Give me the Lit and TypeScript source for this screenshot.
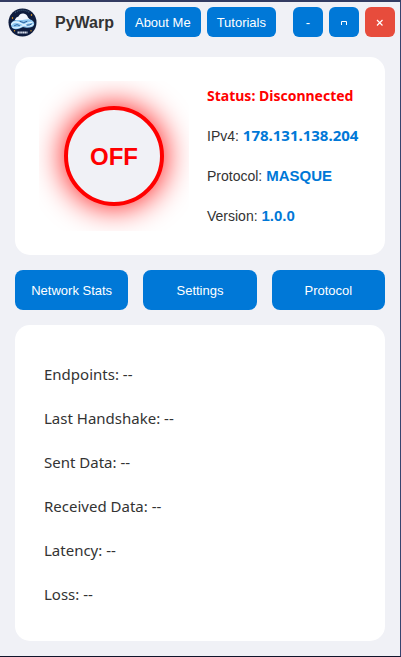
import { LitElement, html, css } from "lit";
import { customElement, state } from "lit/decorators.js";

interface Stat {
  label: string;
  value: string;
}

@customElement("warp-logo")
class WarpLogo extends LitElement {
  static styles = css`
    :host {
      display: block;
      width: 30px;
      height: 30px;
    }
    svg {
      display: block;
      width: 100%;
      height: 100%;
    }
  `;

  render() {
    return html`
      <svg viewBox="0 0 30 30" role="img" aria-label="PyWarp logo">
        <circle cx="15.500" cy="15.500" r="14" fill="#0e1c3e" />
        <path d="M8 5.500Q15.500 1 23 5.500" fill="none" stroke="#3c5675" stroke-width="1.500" stroke-dasharray="1 1" />
        <path d="M8 12.500Q9 10 11.500 9.500Q13 6 16.500 6.500Q20 7 21 10.500L23.500 13H8Z" fill="#f2f7ff" />
        <path d="M4 18C4 14 8 12.500 12 13C16 13.500 19 11.500 23 12.500C28 13.500 28.500 18.500 25 20C21 21.500 18 20.500 16 20C12 22.500 4.500 24 4 18Z" fill="#8cc6f0" />
        <path d="M4.500 17.500C6.500 14 11 14.500 15 17C19 19.500 23 20 26 17.500M6 20.500C11 22 14 20 17 18C19 16.500 22 15 25 15.500"
          fill="none" stroke="#dff2ff" stroke-width="1.300" stroke-linecap="round" />
        <path d="M7.500 18.500Q10 16.500 12.500 18.500M13 14.500Q17 17 20 14.500M20 18.200Q22.500 18.500 24.500 17"
          fill="none" stroke="#285e9b" stroke-width="1" stroke-linecap="round" />
        <path d="M10.500 25.500H20.500" stroke="#d7deed" stroke-width="2" stroke-dasharray="1.500 0.300" />
        <path d="M5.500 10V12M24.500 7V9M7.500 23V24.500M24 23V24.500" stroke="#bd8427" stroke-width="1.200" />
      </svg>
    `;
  }
}

@customElement("app-root")
class AppRoot extends LitElement {
  static styles = css`
    :host {
      display: block;
      font-family: "Liberation Sans", Arial, sans-serif;
      color: #333333;
    }
    * {
      box-sizing: border-box;
    }
    .window {
      min-height: 100vh;
      background: #f0f1f6;
      border-top: 2px solid #333c62;
      border-right: 1px solid #37436f;
      border-bottom: 1px solid #10152b;
    }
    .titlebar {
      display: flex;
      align-items: center;
      gap: 6px;
      padding: 5px 5px 0 7px;
    }
    .title {
      flex: 1;
      margin: 0 0 0 12px;
      font-size: 16px;
      line-height: 32px;
      height: 30px;
      font-weight: bold;
    }
    button {
      margin: 0;
      padding: 0;
      border: 0;
      color: #ffffff;
      background: #0078d7;
      font-family: inherit;
      font-size: 13px;
      line-height: 20px;
      cursor: pointer;
    }
    .link {
      height: 30px;
      padding: 2px 10px 0;
      border-radius: 6px;
    }
    .controls {
      display: flex;
      gap: 6px;
      margin-left: 11px;
    }
    .control {
      display: grid;
      place-items: center;
      width: 30px;
      height: 30px;
      padding-top: 2px;
      border-radius: 6px;
    }
    .control svg {
      width: 10px;
      height: 10px;
      fill: none;
      stroke: #ffffff;
    }
    .close {
      background: #e74c3c;
    }
    main {
      display: grid;
      gap: 15px;
      padding: 20px 15px 15px;
    }
    .card {
      background: #ffffff;
      border-radius: 15px;
    }
    .connection {
      display: flex;
      align-items: center;
      gap: 18px;
      padding: 24px;
    }
    .glow {
      display: grid;
      place-items: center;
      flex: none;
      width: 150px;
      height: 150px;
      overflow: hidden;
    }
    .power {
      width: 100px;
      height: 100px;
      padding-top: 2px;
      border: 4px solid #ff0000;
      border-radius: 50%;
      color: #ff0000;
      background: #f0f1f6;
      box-shadow: 0 0 32px #ff0000;
      font-size: 24px;
      font-weight: bold;
    }
    .details {
      display: grid;
      gap: 20px;
      font-size: 14px;
      line-height: 20px;
      white-space: nowrap;
    }
    .details p {
      height: 20px;
      margin: 0;
    }
    .details .status {
      color: #ff0000;
      font-family: "Noto Sans", sans-serif;
      font-weight: bold;
    }
    .details strong {
      color: #0078d7;
      font-size: 15px;
      line-height: 16px;
    }
    .details .address {
      font-family: "Noto Sans", sans-serif;
    }
    .tabs {
      display: grid;
      grid-template-columns: repeat(3, 1fr);
      gap: 15px;
    }
    .tab {
      height: 40px;
      padding-top: 2px;
      border-radius: 8px;
    }
    .stats {
      display: grid;
      gap: 24px;
      padding: 39px 29px 37px;
      font-family: "Noto Sans", sans-serif;
      font-size: 15px;
      line-height: 20px;
    }
    .stats p {
      margin: 0;
    }
  `;

  @state() private stats: Stat[] = [
    { label: "Endpoints", value: "--" },
    { label: "Last Handshake", value: "--" },
    { label: "Sent Data", value: "--" },
    { label: "Received Data", value: "--" },
    { label: "Latency", value: "--" },
    { label: "Loss", value: "--" },
  ];

  render() {
    return html`
      <div class="window">
        <header class="titlebar">
          <warp-logo></warp-logo>
          <h1 class="title">PyWarp</h1>
          <button class="link">About Me</button>
          <button class="link">Tutorials</button>
          <div class="controls">
            <button class="control" aria-label="Minimize">-</button>
            <button class="control" aria-label="Maximize">
              <svg viewBox="0 0 10 10"><path d="M2.500 7V3.500H7.500V7" /></svg>
            </button>
            <button class="control close" aria-label="Close">
              <svg viewBox="0 0 10 10"><path d="M2 2L7.500 7.500M7.500 2L2 7.500" stroke-width="1.200" /></svg>
            </button>
          </div>
        </header>
        <main>
          <section class="card connection">
            <div class="glow"><button class="power">OFF</button></div>
            <div class="details">
              <p class="status">Status: Disconnected</p>
              <p>IPv4: <strong class="address">178.131.138.204</strong></p>
              <p>Protocol: <strong>MASQUE</strong></p>
              <p>Version: <strong>1.0.0</strong></p>
            </div>
          </section>
          <nav class="tabs">
            <button class="tab">Network Stats</button>
            <button class="tab">Settings</button>
            <button class="tab">Protocol</button>
          </nav>
          <section class="card stats">
            ${this.stats.map((s) => html`<p>${s.label}: ${s.value}</p>`)}
          </section>
        </main>
      </div>
    `;
  }
}
